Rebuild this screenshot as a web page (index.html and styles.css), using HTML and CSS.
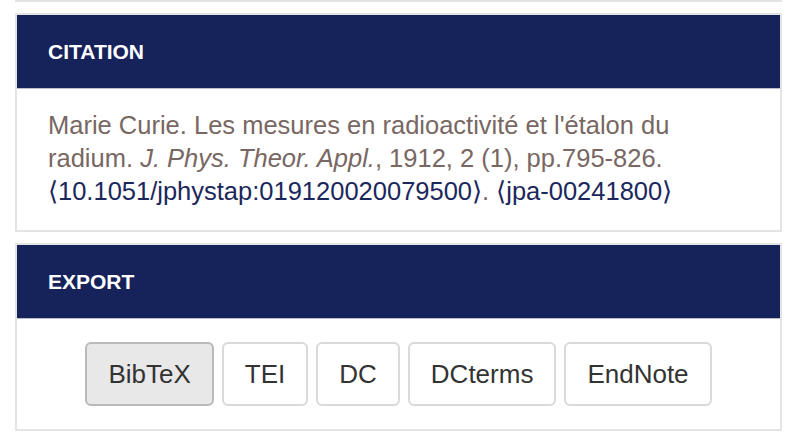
FILE: index.html
```html
<!DOCTYPE html>
<html lang="fr">
<head>
<meta charset="utf-8">
<title>Citation</title>
<link rel="stylesheet" href="styles.css">
</head>
<body>
<div class="page">
  <div class="panel panel-prev"></div>
  <section class="panel">
    <div class="panel-heading">CITATION</div>
    <div class="panel-body">
      <p class="citation">Marie Curie. Les mesures en radioactivité et l'étalon du radium. <em>J. Phys. Theor. Appl.</em>, 1912, 2 (1), pp.795-826. <a href="#">⟨10.1051/jphystap:019120020079500⟩</a>. <a href="#">⟨jpa-00241800⟩</a></p>
    </div>
  </section>
  <section class="panel">
    <div class="panel-heading">EXPORT</div>
    <div class="panel-body export">
      <div class="btn-group">
        <a class="btn active" href="#">BibTeX</a>
        <a class="btn" href="#">TEI</a>
        <a class="btn" href="#">DC</a>
        <a class="btn" href="#">DCterms</a>
        <a class="btn" href="#">EndNote</a>
      </div>
    </div>
  </section>
</div>
</body>
</html>
```
FILE: styles.css
```css
html, body {
  margin: 0;
  padding: 0;
  background: #ffffff;
}
body {
  font-family: "Liberation Sans", Arial, sans-serif;
}
.page {
  width: 767px;
  margin-left: 15px;
  display: flex;
  flex-direction: column;
  gap: 11px;
}
.panel {
  border: 2px solid #e4e4e4;
  background: #fff;
}
.panel-prev {
  border-top: none;
  height: 0;
}
.panel-heading {
  background: #16225a;
  color: #fff;
  font-weight: bold;
  font-size: 21px;
  height: 73px;
  display: flex;
  align-items: center;
  padding: 0 31px;
  border-bottom: 1px solid #b9bdcc;
}
.panel-body {
  padding: 20px 31px 22px;
}
.citation {
  margin: 0;
  max-width: 680px;
  font-size: 25.5px;
  line-height: 33px;
  color: #786763;
}
.citation a {
  color: #1b275c;
  text-decoration: none;
}
.export {
  padding: 23px 31px 23px;
}
.btn-group {
  display: flex;
  justify-content: center;
  gap: 8px;
}
.btn {
  display: flex;
  align-items: center;
  height: 64px;
  box-sizing: border-box;
  padding: 0 21px;
  border: 2px solid #d9d9d9;
  border-radius: 6px;
  background: #fff;
  color: #333;
  font-size: 26px;
  text-decoration: none;
}
.btn.active {
  background: #e8e8e8;
  border-color: #b9b9b9;
}
```
